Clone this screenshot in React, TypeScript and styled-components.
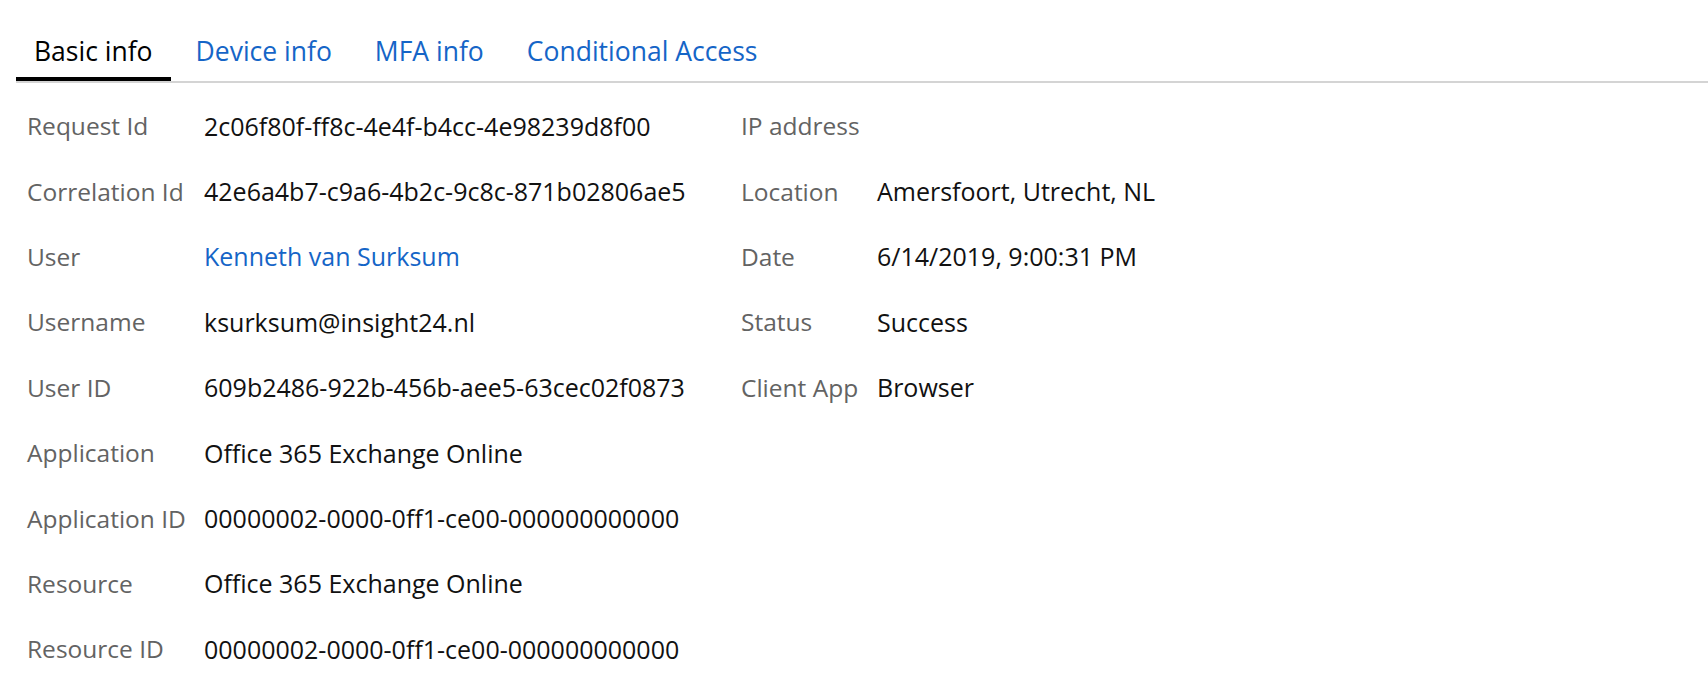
import React from "react";
import styled, { createGlobalStyle } from "styled-components";

const GlobalStyle = createGlobalStyle`
    html, body {
        margin: 0;
        padding: 0;
        background: #fff;
    }
    body {
        font-family: "Segoe UI", "Open Sans", "Noto Sans", sans-serif;
    }
`

type Field = {
    label: string;
    value?: string;
    link?: boolean;
}

const left: Field[] = [
    { label: "Request Id", value: "2c06f80f-ff8c-4e4f-b4cc-4e98239d8f00" },
    { label: "Correlation Id", value: "42e6a4b7-c9a6-4b2c-9c8c-871b02806ae5" },
    { label: "User", value: "Kenneth van Surksum", link: true },
    { label: "Username", value: "ksurksum@insight24.nl" },
    { label: "User ID", value: "609b2486-922b-456b-aee5-63cec02f0873" },
    { label: "Application", value: "Office 365 Exchange Online" },
    { label: "Application ID", value: "00000002-0000-0ff1-ce00-000000000000" },
    { label: "Resource", value: "Office 365 Exchange Online" },
    { label: "Resource ID", value: "00000002-0000-0ff1-ce00-000000000000" },
]

const right: Field[] = [
    { label: "IP address", value: "" },
    { label: "Location", value: "Amersfoort, Utrecht, NL" },
    { label: "Date", value: "6/14/2019, 9:00:31 PM" },
    { label: "Status", value: "Success" },
    { label: "Client App", value: "Browser" },
]

const tabs = ["Basic info", "Device info", "MFA info", "Conditional Access"]

export default function App() {
    return (
        <Page>
            <GlobalStyle />
            <TabBar>
                {tabs.map((t, i) => (
                    <Tab key={t} active={i === 0}>{t}</Tab>
                ))}
            </TabBar>
            <Details>
                {left.map((f, i) => {
                    const r = right[i];
                    return (
                        <React.Fragment key={f.label}>
                            <Label>{f.label}</Label>
                            <Value link={f.link}>{f.value}</Value>
                            <Label>{r ? r.label : ""}</Label>
                            <Value>{r ? r.value : ""}</Value>
                        </React.Fragment>
                    )
                })}
            </Details>
        </Page>
    )
}

const Page = styled.div`
    padding: 16px 0 0 16px;
    min-height: 660px;
`
const TabBar = styled.div`
    display: flex;
    align-items: stretch;
    gap: 7px;
    border-bottom: 2px solid #d4d4d4;
`
const Tab = styled.div<{ active?: boolean }>`
    display: flex;
    align-items: center;
    box-sizing: border-box;
    height: 65px;
    padding: 9px 18px 0;
    font-size: 26.5px;
    color: ${({ active }) => (active ? "#000" : "#1565c7")};
    border-bottom: 4px solid ${({ active }) => (active ? "#000" : "transparent")};
    cursor: pointer;
    white-space: nowrap;
`
const Details = styled.div`
    display: grid;
    grid-template-columns: 177px 537px 136px 1fr;
    grid-auto-rows: 65.4px;
    align-items: center;
    padding: 10px 0 0 11px;
`
const Label = styled.div`
    font-size: 24.5px;
    color: #636363;
    white-space: nowrap;
`
const Value = styled.div<{ link?: boolean }>`
    font-size: 25px;
    color: ${({ link }) => (link ? "#1565c7" : "#111")};
    white-space: nowrap;
    cursor: ${({ link }) => (link ? "pointer" : "default")};
`
